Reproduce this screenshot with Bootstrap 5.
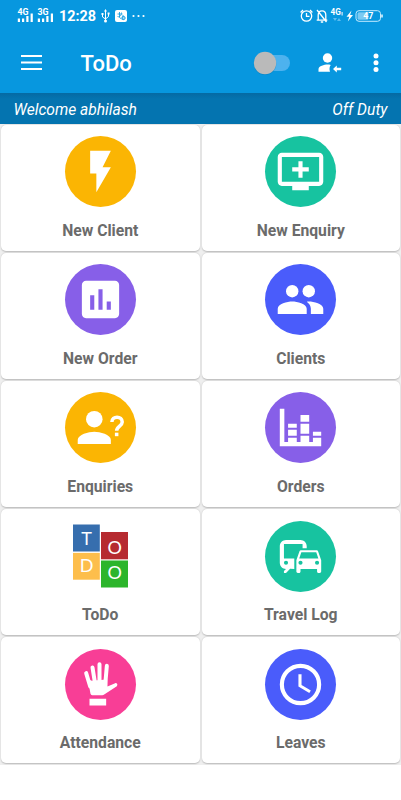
<!DOCTYPE html>
<html lang="en">
<head>
<meta charset="utf-8">
<meta name="viewport" content="width=device-width, initial-scale=1">
<title>ToDo</title>
<link href="https://cdn.jsdelivr.net/npm/bootstrap@5.3.0/dist/css/bootstrap.min.css" rel="stylesheet">
<style>
body{font-family:Roboto,"Noto Sans",sans-serif;background:#fff;overflow:hidden}
svg{display:block;flex:none}
.topbar{background:#0797df;height:93px}
.status{height:32px;padding:0 18px 0 17px}
.clock{font-size:14.4px;font-weight:700;line-height:32px;margin-left:4px;padding-top:1px;width:37px;white-space:nowrap}
.status-icons{margin-left:5px}
.appbar{height:61px;padding:0 22px 0 21px}
.title{font-size:22px;font-weight:500;line-height:30px;margin-left:38.5px;padding-top:2px}
.appbar-person{margin-left:27px}
.appbar-more{margin-left:31.5px}
.welcome{height:30.5px;background:linear-gradient(#056aa3,#0474b0 6px);font-size:15.6px;font-style:italic;padding:0 13.5px;line-height:34px}
.tiles{background:#efefef;padding:1px 1px 1.5px;display:grid;grid-template-columns:198.5px 198.5px;column-gap:2px;row-gap:2.2px;grid-auto-rows:126px}
.tile{border:0;border-radius:5px;box-shadow:0 .5px 1.5px rgba(0,0,0,.22);padding-top:11.6px}
.disc{width:71px;height:71px;border-radius:50%}
.tile-label{font-size:15.7px;font-weight:700;color:#6b6b6b;line-height:20px;margin-top:13.6px}
.amber{background:#fbb503}.teal{background:#17c3a0}.violet{background:#875fe8}.indigo{background:#4a5cfb}.pink{background:#f83e96}
.blocks{font-family:Lato,sans-serif;font-size:18px}
</style>
<script src="https://cdn.jsdelivr.net/npm/bootstrap@5.3.0/dist/js/bootstrap.bundle.min.js"></script>
</head>
<body>
<header class="topbar text-white">
  <div class="status d-flex align-items-center">
    <svg width="38" height="16" viewBox="0 0 38 16" fill="#fff">
      <g font-family="Roboto, sans-serif" font-weight="700" font-size="8.8"><text x="0.5" y="7">4G</text><text x="20.5" y="7">3G</text></g>
      <path d="M.8 10.5h2.2v3.5H.8zM5 10.5h2.2v3.5H5zM9.3 8h2.2v6H9.3zM13.6 5.5h2.2v8.5h-2.200zM20.800 10.500h2.200v3.500h-2.200zM25 10.500h2.200v3.500H25zM29.300 8h2.200v6h-2.200zM33.800 5.500H36v8.500h-2.200z"/>
    </svg>
    <span class="clock">12:28</span>
    <svg class="status-icons" width="46" height="14" viewBox="0 0 46 14" fill="#fff">
      <path d="M4.500 1v11.500M1.500 5v3l3 2 3-2.500V4.500" fill="none" stroke="#fff" stroke-width="1"/><path d="M4.500 0l1.500 2.500H3zM.5 4h2v2h-2zM6.600 3.500h2v2h-2z"/><circle cx="4.500" cy="12" r="1.500"/>
      <rect x="14" y="1" width="12" height="12" rx="2"/>
      <path d="M16.500 5h5M18.500 3v5.500l2 1.500M22 6v5M16.500 7.500c2 1 4-1 4-4" fill="none" stroke="#0797df" stroke-width=".8"/><circle cx="22.500" cy="9" r="1.600" fill="none" stroke="#0797df"/>
      <circle cx="32.500" cy="7" r="1.100"/><circle cx="37.500" cy="7" r="1.100"/><circle cx="42.500" cy="7" r="1.100"/>
    </svg>
    <svg class="ms-auto" width="84" height="16" viewBox="0 0 84 16" fill="none" stroke="#fff" stroke-width="1.300">
      <circle cx="7.500" cy="8" r="5.200"/><path d="M7.500 5v3.300h3M1.600 4.500L4 2M13.400 4.500L11 2"/>
      <path d="M19.200 12V7c0-2.500 1.300-4.200 3.800-4.200S26.800 4.500 26.800 7v5M17.700 12.200h10.600M18 2l9.500 12M21.800 14h2.400"/>
      <path d="M52.500 2.500l-5 6.200h2.700L48.800 13.500l5.200-6.500h-2.900z" fill="#fff" stroke="none"/>
      <text x="31.500" y="7.300" font-family="Roboto, sans-serif" font-weight="700" font-size="8.200" fill="#fff" stroke="none">4G</text>
      <path d="M43.100 4v3.500" stroke-width="1"/>
      <path d="M34 10h4l-2 3zM38 13h4l-2-3z" fill="#5bbcf0" stroke="none"/>
      <rect x="57" y="2.700" width="24.500" height="10.600" rx="3" stroke="#c5ecff" stroke-width="1"/>
      <rect x="58.500" y="4.200" width="11" height="7.600" rx="1.500" fill="#7bcaf2" stroke="none"/>
      <path d="M83 6.500v3" stroke-width="1.400"/>
      <text x="64.200" y="11" font-family="Roboto, sans-serif" font-weight="700" font-size="8.800" fill="#fff" stroke="none">47</text>
    </svg>
  </div>
  <div class="appbar d-flex align-items-center">
    <svg width="21" height="15" viewBox="0 0 21 15" fill="#fff"><path d="M0 0h21v2H0zM0 6.500h21v2H0zM0 13h21v2H0z"/></svg>
    <span class="title">ToDo</span>
    <svg class="ms-auto" width="38" height="26" viewBox="0 0 38 26">
      <rect x="6" y="5" width="31" height="16" rx="8" fill="#4db2ee"/>
      <circle cx="12" cy="13.800" r="11.300" fill="#0579b8" opacity=".5"/><circle cx="12" cy="13" r="11.200" fill="#bababa"/>
    </svg>
    <svg class="appbar-person" width="24" height="20" viewBox="0 0 24 20" fill="#fff">
      <circle cx="9.500" cy="5" r="4.700"/><path d="M.5 18.700v-2.500c0-3.200 5.800-4.700 9-4.700 1.200 0 2.200.1 3.300.4-1.300 1.600-1.700 4.200-.8 6.800zM15 16l3.800-3.500v2.300h4.400v2.400h-4.400v2.300z"/>
    </svg>
    <svg class="appbar-more" width="6" height="20" viewBox="0 0 6 20" fill="#fff"><circle cx="3" cy="3" r="2.500"/><circle cx="3" cy="9.800" r="2.500"/><circle cx="3" cy="16.600" r="2.500"/></svg>
  </div>
</header>
<div class="welcome text-white d-flex justify-content-between"><span>Welcome abhilash</span><span>Off Duty</span></div>
<main class="tiles">
  <div class="card tile align-items-center"><div class="disc amber"><svg width="71" height="71" viewBox="-5.15 -5.15 34.3 34.3" fill="#fff"><path d="M7 2v11h3v9l7-12h-4l4-8z"/></svg></div><div class="tile-label">New Client</div></div>
  <div class="card tile align-items-center"><div class="disc teal"><svg width="71" height="71" viewBox="-5.15 -5.15 34.3 34.3" fill="#fff"><path d="M21 3H3c-1.110 0-2 .89-2 2v12c0 1.100.89 2 2 2h5v2h8v-2h5c1.100 0 1.990-.9 1.990-2L23 5c0-1.110-.9-2-2-2zm0 14H3V5h18v12zm-5-7v2h-3v3h-2v-3H8v-2h3V7h2v3h3z"/></svg></div><div class="tile-label">New Enquiry</div></div>
  <div class="card tile align-items-center"><div class="disc violet"><svg width="71" height="71" viewBox="-5.15 -5.15 34.3 34.3" fill="#fff"><path d="M19 3H5c-1.100 0-2 .9-2 2v14c0 1.100.9 2 2 2h14c1.100 0 2-.9 2-2V5c0-1.100-.9-2-2-2zM9 17H7v-7h2v7zm4 0h-2V7h2v10zm4 0h-2v-4h2v4z"/></svg></div><div class="tile-label">New Order</div></div>
  <div class="card tile align-items-center"><div class="disc indigo"><svg width="71" height="71" viewBox="-5.15 -5.15 34.3 34.3" fill="#fff"><circle cx="16" cy="8" r="3"/><circle cx="8" cy="8" r="3"/><path d="M8 13c-2.330 0-7 1.170-7 3.500V19h14v-2.500c0-2.330-4.670-3.500-7-3.500zm8 0c-.29 0-.62.02-.97.05 1.160.84 1.970 1.970 1.970 3.450V19h6v-2.500c0-2.330-4.670-3.500-7-3.500z"/></svg></div><div class="tile-label">Clients</div></div>
  <div class="card tile align-items-center"><div class="disc amber"><svg width="71" height="71" viewBox="-5.15 -5.15 34.3 34.3" fill="#fff"><circle cx="9" cy="8" r="4"/><path d="M9 14c-2.670 0-8 1.340-8 4v2h16v-2c0-2.660-5.330-4-8-4z"/><path d="M17.500 9.400c0-3.200 5-3.200 5 0 0 1.900-2.700 2-2.700 4.200" fill="none" stroke="#fff" stroke-width="1.700"/><path d="M18.950 14.500h1.700v1.700h-1.700z"/></svg></div><div class="tile-label">Enquiries</div></div>
  <div class="card tile align-items-center"><div class="disc violet"><svg width="71" height="71" viewBox="-5.15 -5.15 34.3 34.3" fill="#fff"><path d="M2 3h2.200v16H6v-2h4.200v2H12v-3h4.200v3H18v-2h4v4H2zM6 10.200h4.200v1.900H6zM6 13.100h4.200V16H6zM12 6h4.200v3.200H12zM12 10.200h4.200V15H12zM18 14.100h4V16h-4z"/></svg></div><div class="tile-label">Orders</div></div>
  <div class="card tile align-items-center"><svg class="blocks" width="71" height="71" viewBox="0 0 71 71" fill="#fff" text-anchor="middle">
    <rect x="8" y="3.500" width="26.800" height="27" fill="#366eae"/><rect x="36" y="11" width="27" height="27.300" fill="#b62a30"/><rect x="8" y="31.900" width="26.800" height="26.800" fill="#fdbe4c"/><rect x="36" y="39.500" width="27" height="27" fill="#2cb52b"/>
    <text x="21.500" y="24">T</text><text x="21.500" y="50.800">D</text><text x="49.700" y="32.500">O</text><text x="49.700" y="58">O</text></svg><div class="tile-label">ToDo</div></div>
  <div class="card tile align-items-center"><div class="disc teal"><svg width="71" height="71" viewBox="-5.15 -5.15 34.3 34.3" fill="#fff" fill-rule="evenodd"><path d="M12 4H5C3.340 4 2 5.340 2 7v8c0 1.660 1.340 3 3 3l-1 1v1h1l2-2.030L9 18v-5H4V5.980L13 6v2h2V7c0-1.660-1.340-3-3-3zM5 14a1 1 0 1 1 0 2 1 1 0 1 1 0-2zM20.570 9.660c-.14-.4-.52-.66-.97-.66h-7.190c-.46 0-.83.26-.98.660L10 13.770l.01 5.510c0 .38.31.72.69.720h.62c.38 0 .68-.38.68-.76V18h8v1.240c0 .38.31.76.69.760h.61c.38 0 .69-.34.69-.72l.01-1.370v-4.140l-1.430-4.110zM12.410 10h7.190l1.030 3h-9.250l1.030-3zM12 14a1 1 0 1 1 0 2 1 1 0 1 1 0-2zM20 14a1 1 0 1 1 0 2 1 1 0 1 1 0-2z"/></svg></div><div class="tile-label">Travel Log</div></div>
  <div class="card tile align-items-center"><div class="disc pink"><svg width="71" height="71" viewBox="194.5 36.5 213 213" fill="#fff"><g fill="none" stroke="#fff" stroke-width="12" stroke-linecap="round"><path d="M258 109l12 40M277 92l8 50M298 82v60M320 87l-5 58"/></g><path d="M263 127l12 5 35-3 11-2 1 22 23-10c5-1 9 4 5 9l-38 25q-2 2-6 2h-30q-4 0-5-4zM268 186h50v20h-50z"/></svg></div><div class="tile-label">Attendance</div></div>
  <div class="card tile align-items-center"><div class="disc indigo"><svg width="71" height="71" viewBox="-5.15 -5.15 34.3 34.3" fill="#fff"><circle cx="12" cy="12" r="9" fill="none" stroke="#fff" stroke-width="2"/><path d="M12.500 7H11v6l5.250 3.150.75-1.230-4.500-2.670z"/></svg></div><div class="tile-label">Leaves</div></div>
</main>
</body>
</html>
